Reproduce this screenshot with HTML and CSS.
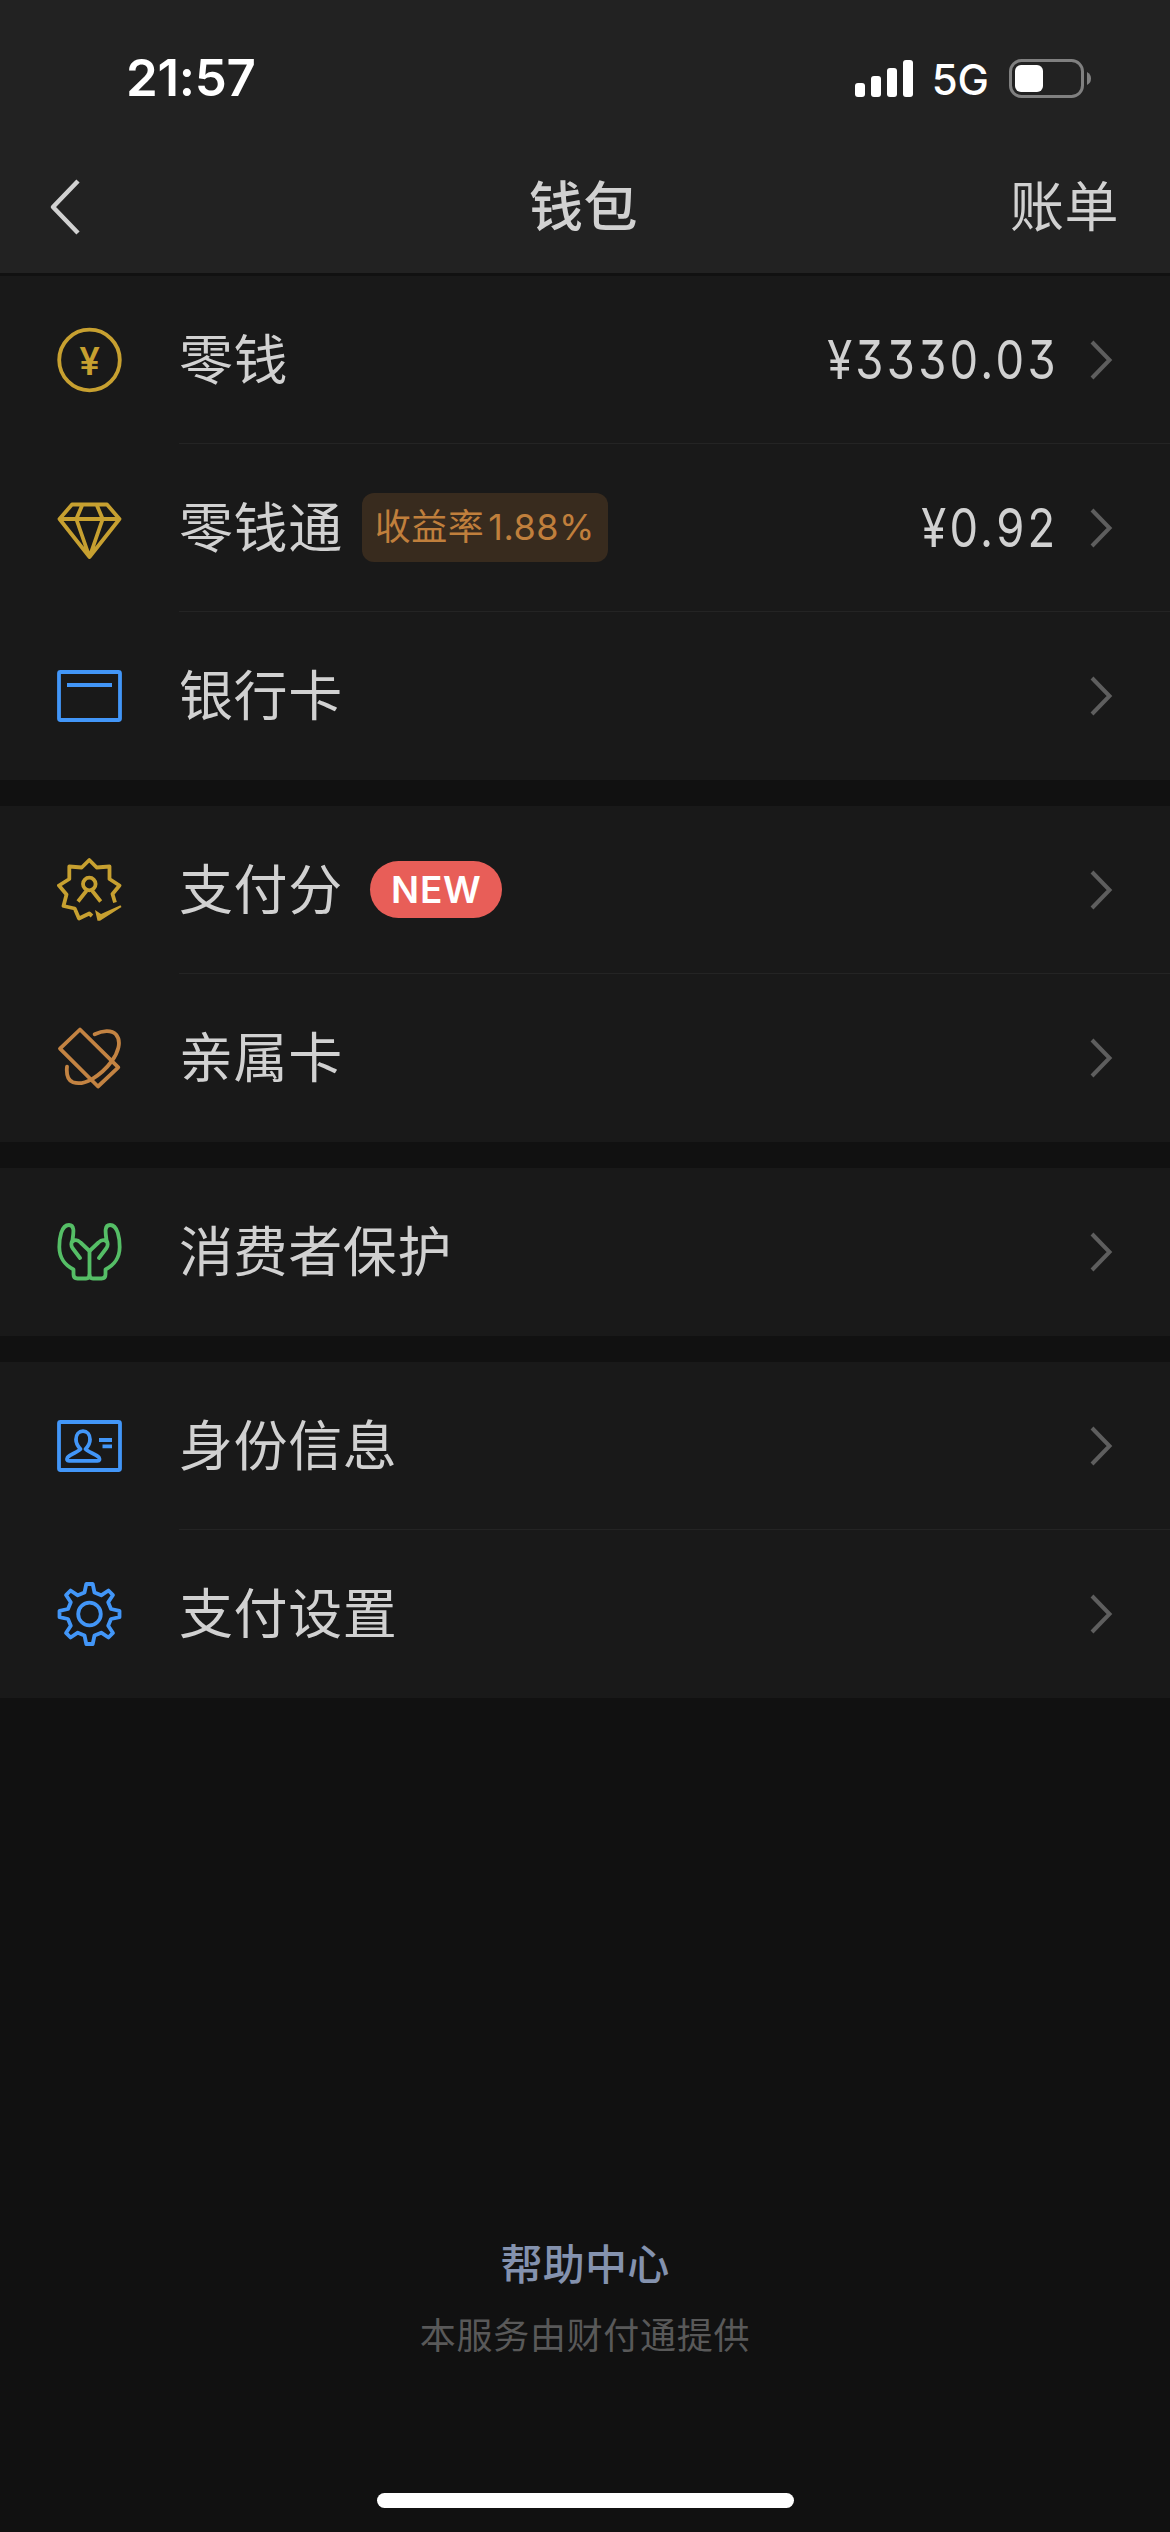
FILE: index.html
```html
<!DOCTYPE html>
<html lang="zh-CN">
<head>
<meta charset="utf-8">
<title>钱包</title>
<link rel="stylesheet" href="styles.css">
</head>
<body>
<svg class="defs" width="0" height="0">
  <symbol id="chevron" viewBox="0 0 24 42"><path d="M3 3 20.5 21 3 39" fill="none" stroke="currentColor" stroke-width="4"/></symbol>
</svg>
<header class="top">
  <div class="status">
    <span class="time">21:57</span>
    <div class="signals">
      <svg class="bars" viewBox="0 0 58 37"><rect y="23" width="10" height="14" rx="3"/><rect x="16" y="16" width="10" height="21" rx="3"/><rect x="32" y="8" width="10" height="29" rx="3"/><rect x="48" width="10" height="37" rx="3"/></svg>
      <span class="net">5G</span>
      <svg class="battery" viewBox="0 0 82 39"><rect x="1.5" y="1.5" width="72" height="36" rx="11" fill="none" stroke="#808080" stroke-width="3"/><rect x="6" y="6" width="28" height="27" rx="6" fill="#fff"/><path d="M78 13q4 2 4 6.500t-4 6.500z" fill="#808080"/></svg>
    </div>
  </div>
  <nav class="nav">
    <svg class="back" viewBox="0 0 34 60"><path d="M30 4 5 30l25 26" fill="none" stroke="#d1d1d1" stroke-width="4.500" stroke-linejoin="round"/></svg>
    <h1 class="title">钱包</h1>
    <a class="bill">账单</a>
  </nav>
</header>
<main class="list">
  <section class="group">
    <div class="row">
      <svg class="icon gold" viewBox="0 0 65 66"><circle cx="32.500" cy="33" r="30.300"/><text class="yen" x="32.500" y="47.500" text-anchor="middle">¥</text></svg>
      <div class="cell"><span class="label">零钱</span><span class="amount">¥3330.03</span><svg class="chev"><use href="#chevron"/></svg></div>
    </div>
    <div class="row">
      <svg class="icon gold" viewBox="0 0 65 66"><path d="M15 9.500H50L62.500 24 32.500 62 2.500 24zM2.500 24h60M25.500 9.500 19.300 24l13.200 38 13.200-38-6.200-14.500"/></svg>
      <div class="cell"><span class="label">零钱通</span><span class="rate">收益率<span class="num">1.88%</span></span><span class="amount">¥0.92</span><svg class="chev"><use href="#chevron"/></svg></div>
    </div>
    <div class="row">
      <svg class="icon blue" viewBox="0 0 65 66"><rect x="2" y="9" width="61" height="48" rx="1.500"/><path d="M10 22h45"/></svg>
      <div class="cell"><span class="label">银行卡</span><svg class="chev"><use href="#chevron"/></svg></div>
    </div>
  </section>
  <section class="group">
    <div class="row">
      <svg class="icon gold" viewBox="0 0 65 66"><path d="M35 59 32.300 56.500 22 61.500 17.700 51.500 6.500 49 9.500 37.500 2 28.500 12.300 22V9.500l12.400 1L32.300 3l7.400 7.500 12.800-1V22L62.500 28.500 55.500 37 58 45.500"/><circle cx="32.300" cy="27" r="6.300"/><path d="M29.700 33.500 21 44.500M35 33.500 43.700 44.500"/><path class="solid" d="M38 53l6 4 19.500-8.700 1 1.700L43 63.700h-2.500z"/></svg>
      <div class="cell"><span class="label">支付分</span><span class="new">NEW</span><svg class="chev"><use href="#chevron"/></svg></div>
    </div>
    <div class="row">
      <svg class="icon orange" viewBox="0 0 65 66"><path d="M23 4.500 3 23.700 41 61.500 61.300 42.300z"/><path stroke-linecap="round" d="M37.700 9.300C45.500 5.500 54.500 4.500 59 9.500 65 16.500 61 28 54.500 36.500 49 44 42 50 34.700 54.300 28.500 57.700 21 59 16 57.300 10 55 9.300 48.500 10 41.700"/></svg>
      <div class="cell"><span class="label">亲属卡</span><svg class="chev"><use href="#chevron"/></svg></div>
    </div>
  </section>
  <section class="group">
    <div class="row">
      <svg class="icon green" viewBox="0 0 65 66"><path stroke-linecap="round" d="M32.500 32V56q0 3.500-3.500 3.500h-8.500q-4 0-4-4V50.500C8 46 2.500 40 2.300 28 2.300 20 4 6 12 6c6 0 4.500 8 3.500 15-1.500 3-2 5 0 8l7.500 10M15.500 22.500c3-2.500 5.500-1.500 8 1l9 8.500"/><path stroke-linecap="round" d="M32.500 56q0 3.500 3.500 3.500h8.500q4 0 4-4V50.500C57 46 62.500 40 62.700 28 62.700 20 61 6 53 6c-6 0-4.500 8-3.500 15 1.500 3 2 5 0 8L42 39M49.500 22.500c-3-2.500-5.500-1.500-8 1l-9 8.500"/></svg>
      <div class="cell"><span class="label">消费者保护</span><svg class="chev"><use href="#chevron"/></svg></div>
    </div>
  </section>
  <section class="group">
    <div class="row">
      <svg class="icon blue" viewBox="0 0 65 66"><rect x="2" y="9" width="61" height="48" rx="1.500"/><path d="M23.500 36c-3-3-4.500-6-4.500-9.500 0-5 3-8.300 7-8.300s7 3.300 7 8.300c0 3.500-1.500 6.500-4.500 9.500 2 3 11 5 13.500 8.500 1 2 .5 3.300-1.500 3.300H12c-2 0-2.500-1.300-1.500-3.300C13 41 21.500 39 23.500 36z"/><path d="M42 27h13M45.500 33.300H55"/></svg>
      <div class="cell"><span class="label">身份信息</span><svg class="chev"><use href="#chevron"/></svg></div>
    </div>
    <div class="row">
      <svg class="icon blue" viewBox="0 0 65 66"><path transform="translate(32.500 33)" d="M-5-21.500-3.200-30H3.200L5-21.500 11.700-18.700 18.950-23.500 23.500-18.950 18.700-11.700 21.500-5 30-3.200V3.200L21.500 5 18.700 11.700 23.500 18.950 18.950 23.500 11.700 18.700 5 21.500 3.200 30H-3.200L-5 21.500-11.700 18.700-18.950 23.500-23.500 18.950-18.700 11.700-21.500 5-30 3.200V-3.200L-21.500-5-18.700-11.700-23.500-18.950-18.950-23.500-11.700-18.700z"/><circle cx="32.500" cy="33" r="11.300"/></svg>
      <div class="cell"><span class="label">支付设置</span><svg class="chev"><use href="#chevron"/></svg></div>
    </div>
  </section>
</main>
<footer class="footer">
  <a class="help">帮助中心</a>
  <p class="note">本服务由财付通提供</p>
  <div class="home"></div>
</footer>
</body>
</html>
```
FILE: styles.css
```css
* { box-sizing: border-box; }
body {
  margin: 0;
  width: 1170px;
  height: 2532px;
  display: flex;
  flex-direction: column;
  background: #111;
  color: #d1d1d1;
  font-family: Inter, "Noto Sans CJK SC", sans-serif;
  overflow: hidden;
}
.defs { display: none; }
.top { height: 276px; background: #222; border-bottom: 3px solid #111; }
.status { height: 156px; padding: 0 79px 0 126px; display: flex; justify-content: space-between; align-items: center; color: #fff; }
.time { font-size: 51px; font-weight: 600; line-height: 60px; letter-spacing: -0.3px; }
.signals { display: flex; align-items: center; }
.bars { width: 58px; height: 37px; fill: #fff; }
.net { font-size: 42px; font-weight: 450; line-height: 50px; margin: 3px 20px 0 19px; }
.battery { width: 82px; height: 39px; }
.nav { height: 102px; padding: 0 51px 0 48px; display: grid; grid-template-columns: 1fr auto 1fr; align-items: center; }
.back { width: 34px; height: 60px; }
.title { margin: 0; padding-top: 2px; font-size: 54px; font-weight: 500; line-height: 72px; letter-spacing: 0.5px; }
.bill { padding-top: 2px; font-size: 54px; line-height: 72px; letter-spacing: 0.5px; justify-self: end; }
.list { display: flex; flex-direction: column; gap: 26px; }
.group { background: #191919; }
.row { height: 168px; display: flex; align-items: center; padding-left: 57px; }
.icon { width: 65px; height: 66px; flex: none; margin-right: 57px; fill: none; stroke: currentColor; stroke-width: 3.8; stroke-linejoin: round; }
.gold { color: #c7a030; }
.blue { color: #4296f8; }
.orange { color: #c38342; }
.green { color: #55be66; }
.solid { fill: currentColor; stroke: none; }
.yen { font: 500 38px Roboto, sans-serif; fill: currentColor; stroke: none; }
.cell { flex: 1; height: 168px; display: flex; align-items: center; padding-right: 57px; border-bottom: 1px solid #242424; }
.row:last-child .cell { border-bottom-color: transparent; }
.label { padding-top: 3px; font-size: 54px; line-height: 76px; letter-spacing: 0.6px; }
.rate { height: 69px; width: 246px; margin-left: 19px; padding-left: 13px; border-radius: 12px; background: #382b1e; color: #c07f3c; font-size: 36px; line-height: 68px; letter-spacing: 0.5px; white-space: nowrap; }
.num { margin-left: 4px; }
.new { width: 132px; height: 57px; margin-left: 27px; padding-left: 1px; border-radius: 29px; background: #e85e58; color: #fff; font-size: 37px; font-weight: 600; line-height: 57px; letter-spacing: 0.8px; text-align: center; }
.amount { margin-left: auto; margin-right: 30.5px; font-size: 54px; line-height: 66px; font-feature-settings: "cv09"; letter-spacing: 3.9px; transform: scaleX(0.84); transform-origin: right; }
.chev { width: 24px; height: 42px; margin-left: auto; color: #5e5e5e; }
.amount + .chev { margin-left: 0; }
.footer { flex: 1; display: flex; flex-direction: column; justify-content: flex-end; align-items: center; }
.help { color: #8492ae; font-size: 42px; font-weight: 500; line-height: 60px; letter-spacing: 0.3px; }
.note { margin: 14px 0 130px; color: #595959; font-size: 36px; line-height: 54px; letter-spacing: 0.7px; }
.home { width: 417px; height: 15px; margin-bottom: 24px; border-radius: 8px; background: #fff; }
```
